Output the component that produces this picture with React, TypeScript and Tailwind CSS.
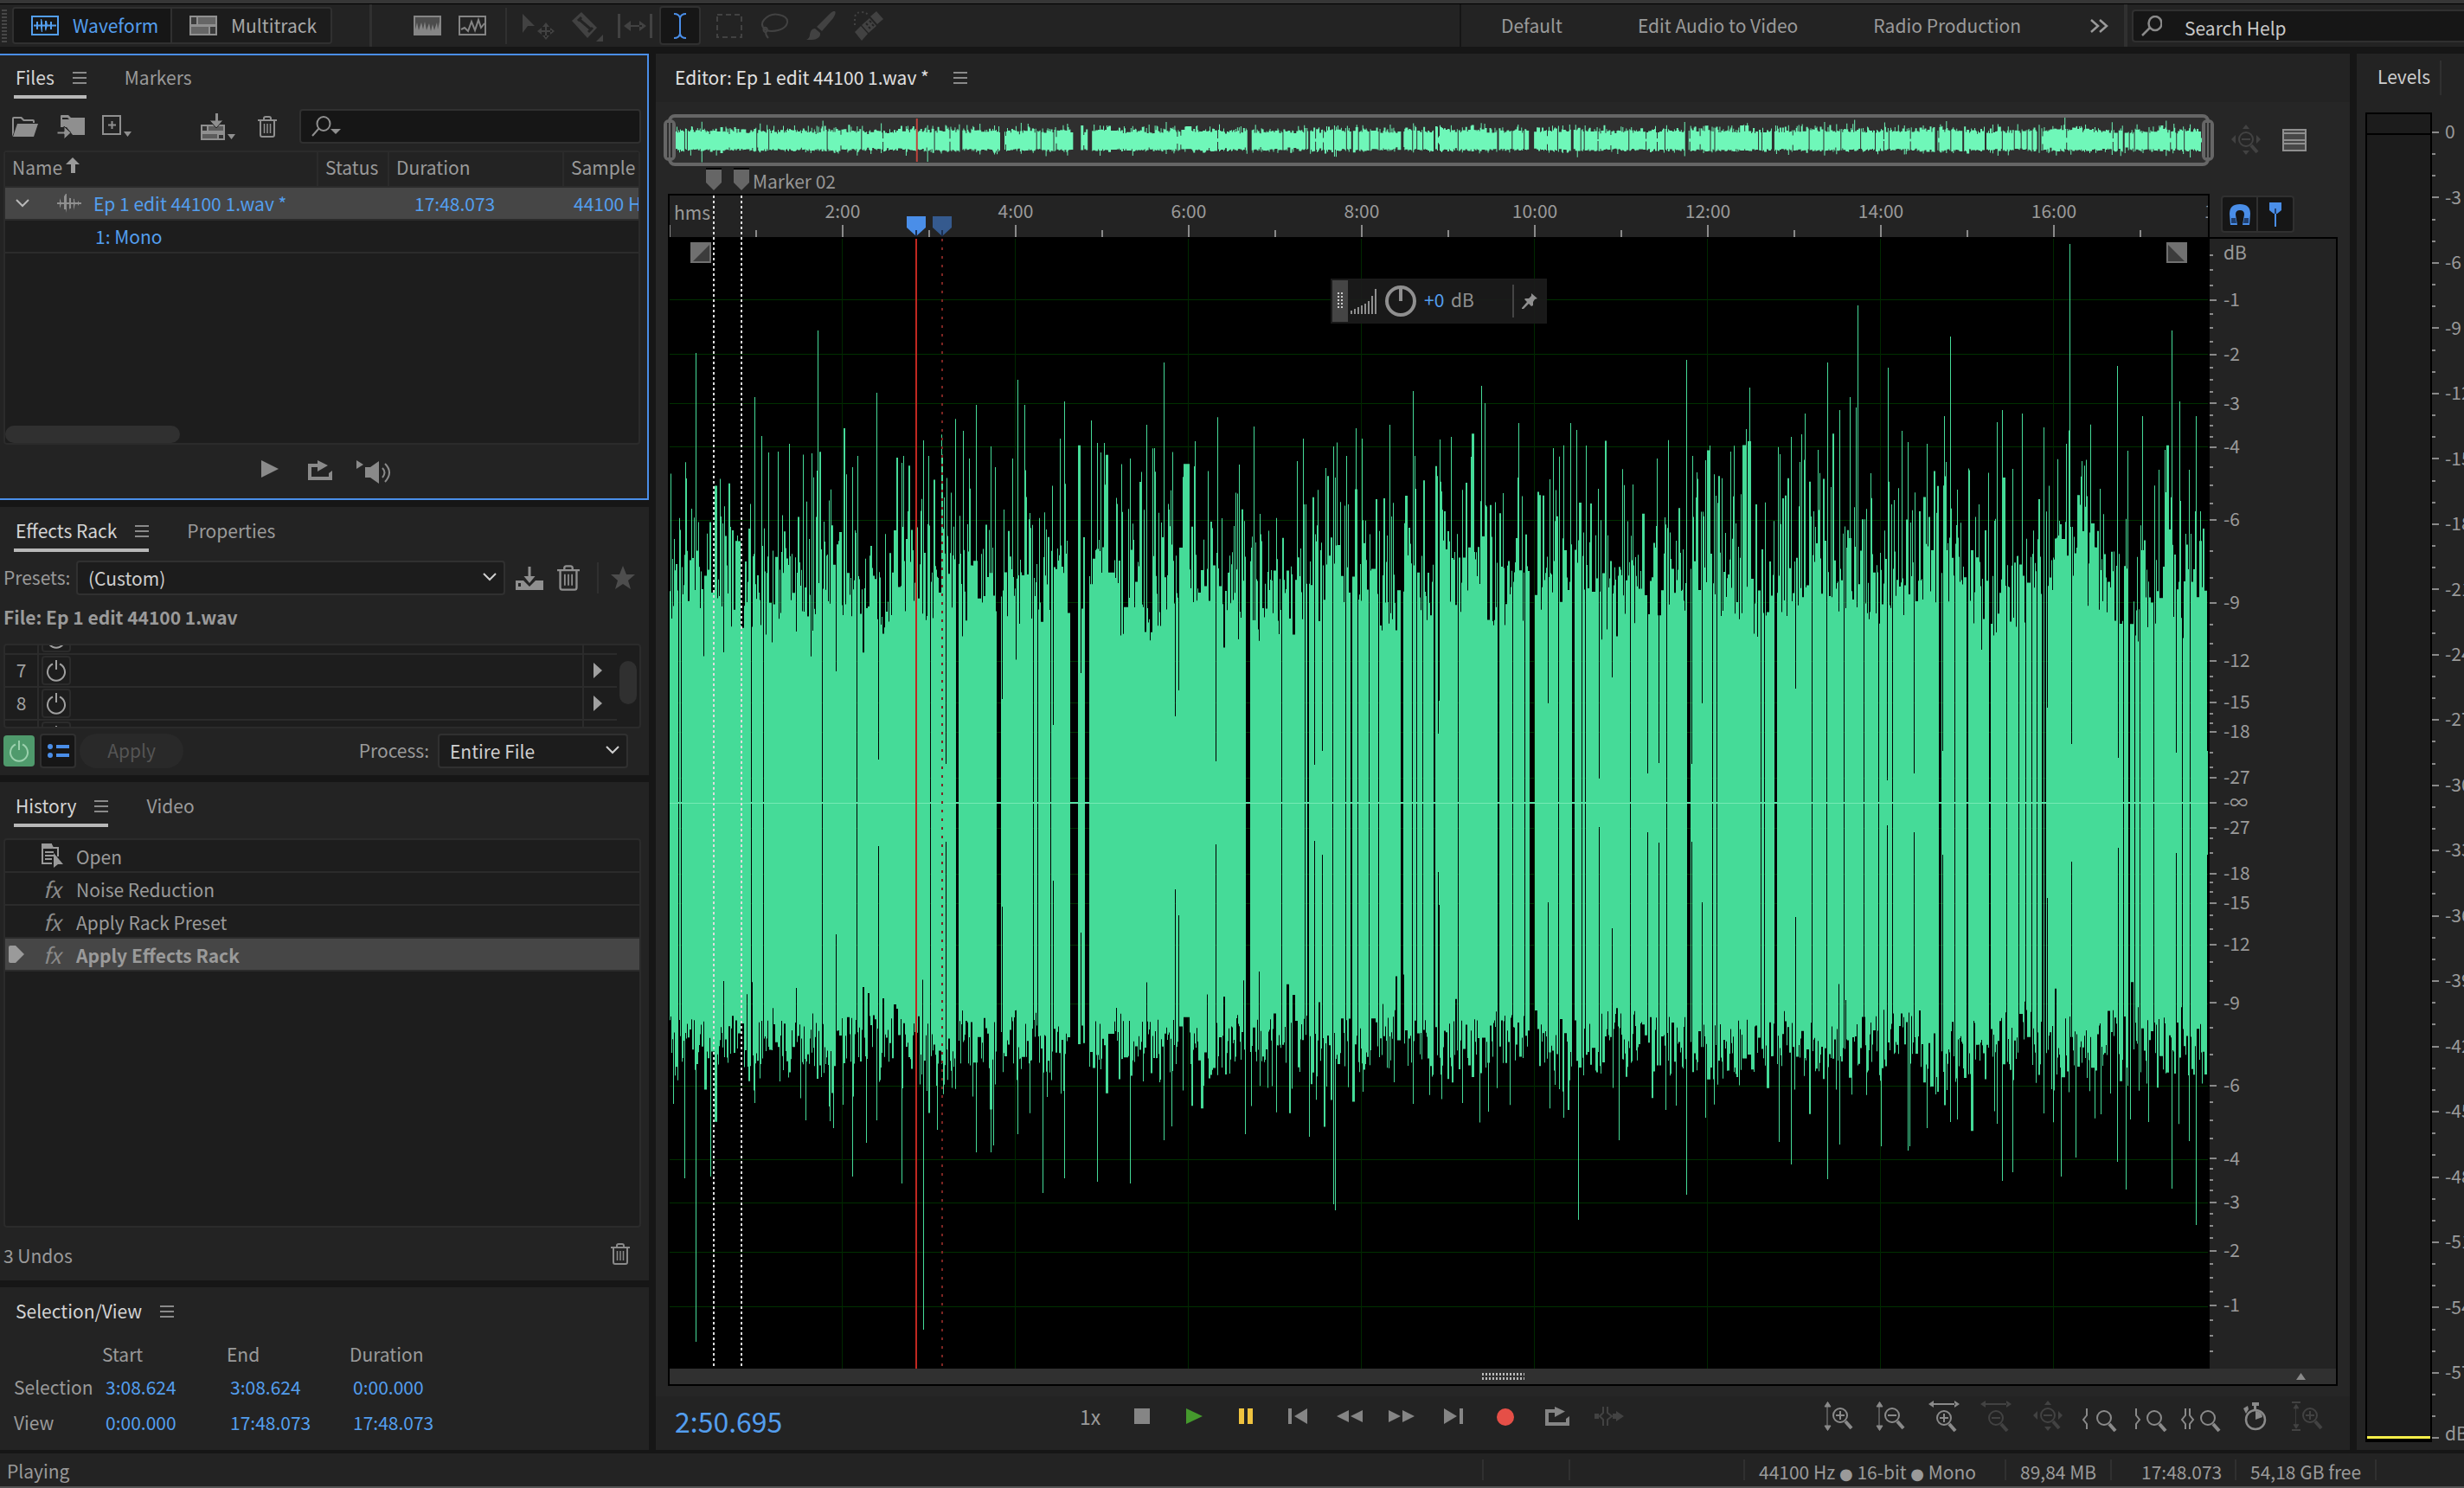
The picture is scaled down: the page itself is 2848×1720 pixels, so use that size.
import type { ReactNode } from 'react';
import { clsx } from 'clsx';

// ━━━━━━━━━━━━━━━━━━━━━━━━━━━━━━━━━━━━━━━━━━
// Waveform data
// ━━━━━━━━━━━━━━━━━━━━━━━━━━━━━━━━━━━━━━━━━━

const WIDTH = 1778;
const HALF = 653;

// [start, end] columns of silence
const gaps: number[][] = [
  [10, 10], [13, 13], [94, 94], [108, 108], [176, 176], [216, 216], [301, 301], [331, 333], [378, 382],
  [420, 420], [425, 425], [440, 440], [463, 471], [480, 484], [666, 670], [707, 707], [734, 734], [737, 738],
  [766, 766], [781, 781], [787, 788], [795, 795], [808, 808], [819, 819], [845, 847], [858, 858], [863, 863],
  [870, 870], [883, 884], [911, 911], [957, 958], [974, 974], [988, 988], [994, 999], [1027, 1027],
  [1043, 1045], [1054, 1054], [1058, 1058], [1110, 1110], [1152, 1152], [1176, 1179], [1205, 1205],
  [1210, 1210], [1261, 1261], [1265, 1265], [1277, 1279], [1320, 1320], [1337, 1337], [1357, 1357],
  [1380, 1380], [1397, 1397], [1413, 1413], [1467, 1469], [1485, 1485], [1499, 1500], [1525, 1526],
  [1545, 1545], [1559, 1559], [1567, 1567], [1574, 1574], [1580, 1580], [1586, 1587], [1589, 1590],
  [1680, 1680], [1686, 1687], [1693, 1693], [1699, 1699], [1715, 1715], [1748, 1748], [1757, 1757],
];

// [column, amplitude] of short quiet passages
const dips: number[][] = [
  [192, 152], [241, 50], [319, 45], [384, 120], [443, 90], [465, 65], [475, 150], [584, 100], [588, 130],
  [631, 48], [745, 44], [754, 60], [888, 80], [889, 118], [1015, 115], [1074, 28], [1089, 145], [1130, 34],
  [1143, 46], [1181, 45], [1193, 115], [1301, 132], [1407, 26], [1438, 34], [1471, 60], [1592, 110],
  [1620, 68], [1674, 52], [1741, 58], [1777, 60],
];

const peaksUp: number[][] = [
  [30, 520], [98, 469], [125, 406], [138, 415], [164, 404], [171, 546], [211, 388], [239, 474], [268, 393],
  [270, 401], [293, 419], [299, 401], [319, 401], [339, 430], [346, 398], [354, 460], [371, 412], [376, 388],
  [396, 398], [402, 489], [410, 460], [451, 421], [456, 464], [475, 396], [487, 442], [494, 416], [498, 405],
  [502, 416], [532, 398], [551, 437], [560, 410], [571, 509], [606, 389], [658, 391], [675, 435], [725, 395],
  [732, 421], [767, 412], [769, 376], [782, 401], [793, 433], [800, 421], [832, 437], [859, 476], [861, 401],
  [903, 423], [938, 482], [942, 462], [981, 439], [1021, 410], [1041, 439], [1048, 431], [1059, 413],
  [1141, 398], [1175, 512], [1182, 401], [1202, 413], [1244, 432], [1248, 480], [1283, 403], [1296, 423],
  [1308, 426], [1312, 450], [1327, 408], [1338, 509], [1352, 454], [1364, 469], [1371, 457], [1373, 575],
  [1408, 503], [1424, 430], [1431, 417], [1453, 415], [1473, 447], [1480, 539], [1534, 440], [1540, 454],
  [1552, 386], [1563, 450], [1588, 434], [1614, 415], [1618, 646], [1673, 505], [1702, 447], [1728, 408],
  [1736, 546], [1745, 464], [1756, 385], [1764, 447],
];

const peaksDown: number[][] = [
  [17, 434], [30, 623], [47, 432], [98, 347], [157, 367], [189, 376], [211, 432], [227, 393], [239, 367],
  [268, 440], [293, 609], [309, 378], [319, 385], [354, 404], [371, 404], [374, 396], [402, 383], [431, 451],
  [456, 434], [494, 438], [532, 440], [571, 390], [580, 374], [665, 383], [739, 386], [767, 464], [769, 471],
  [859, 348], [946, 357], [1033, 364], [1050, 482], [1097, 390], [1151, 355], [1175, 453], [1197, 364],
  [1282, 392], [1296, 418], [1338, 435], [1352, 395], [1400, 397], [1431, 402], [1433, 397], [1453, 376],
  [1480, 369], [1488, 366], [1534, 371], [1540, 437], [1552, 427], [1588, 359], [1608, 432], [1625, 410],
  [1673, 415], [1683, 447], [1688, 366], [1709, 369], [1736, 446], [1756, 391], [1764, 488],
];

// Deterministic noise so every render draws the same audio
function makeRandom(seed: number) {
  let s = seed;
  return () => {
    s = (s * 1664525 + 1013904223) % 4294967296;
    return s / 4294967296;
  };
}

function buildSamples() {
  const rnd = makeRandom(44100);
  const up: number[] = [];
  const down: number[] = [];
  for (let x = 0; x < WIDTH; x++) {
    const swell = Math.sin(x / 23) * 14 + Math.sin(x / 7) * 10;
    const hold = x > 0 && rnd() < 0.3;
    const quiet = rnd() < 0.04 ? 0.8 : 1;
    const top = (204 + swell + rnd() * 85 + Math.pow(rnd(), 3) * 150) * quiet;
    const bottom = (242 + swell / 2 + rnd() * 66 + Math.pow(rnd(), 5) * 70) * quiet;
    up.push(hold ? up[x - 1] : top);
    down.push(hold ? down[x - 1] : bottom);
  }
  peaksUp.forEach(([x, a]) => (up[x] = a));
  peaksDown.forEach(([x, a]) => (down[x] = a));
  dips.forEach(([x, a]) => {
    up[x] = a;
    down[x] = a;
  });
  gaps.forEach(([from, to]) => {
    for (let x = from; x <= to; x++) {
      up[x] = 1;
      down[x] = 1;
    }
  });
  return { up, down };
}

const samples = buildSamples();

function wavePath(center: number, scale: number) {
  let d = '';
  for (let x = 0; x < WIDTH; x++) {
    const top = (center - samples.up[x] * scale).toFixed(1);
    const bottom = (center + samples.down[x] * scale).toFixed(1);
    d += `M${x} ${top}h1V${bottom}h-1z`;
  }
  return d;
}

const mainWave = wavePath(HALF + 1, 1);
const overviewWave = wavePath(26, 0.041);

// ━━━━━━━━━━━━━━━━━━━━━━━━━━━━━━━━━━━━━━━━━━
// Scales
// ━━━━━━━━━━━━━━━━━━━━━━━━━━━━━━━━━━━━━━━━━━

const dbLabels = [1, 2, 3, 4, 6, 9, 12, 15, 18, 27];
const dbMinor = [
  0.25, 0.5, 0.75, 1.25, 1.5, 1.75, 2.25, 2.5, 2.75, 3.25, 3.5, 3.75, 4.5, 5, 5.5, 7, 8, 10, 11, 13, 14, 16, 17,
  21, 24,
];
const amp = (db: number) => HALF * Math.pow(10, -db / 20);
const bothSides = (list: number[]) => list.flatMap((db) => [HALF + 1 - amp(db), HALF + 1 + amp(db)]);
const minutes = Array.from({ length: 19 }, (_, i) => i);
const levelRows = Array.from({ length: 61 }, (_, i) => i);

// ━━━━━━━━━━━━━━━━━━━━━━━━━━━━━━━━━━━━━━━━━━
// Icons
// ━━━━━━━━━━━━━━━━━━━━━━━━━━━━━━━━━━━━━━━━━━

interface IconProps {
  w?: number;
  h?: number;
  className?: string;
  children: ReactNode;
}

function Icon({ w = 32, h = 32, className, children }: IconProps) {
  return (
    <svg width={w} height={h} viewBox={`0 0 ${w} ${h}`} fill="currentColor" className={clsx('shrink-0', className)} aria-hidden="true">
      {children}
    </svg>
  );
}

function MenuIcon() {
  return (
    <Icon w={16} h={14} className="text-[#8a8a8a]">
      <path d="M0 0h16v2H0zM0 6h16v2H0zM0 12h16v2H0z" />
    </Icon>
  );
}

function TrashIcon({ large }: { large?: boolean }) {
  return (
    <svg width={large ? 26 : 22} height={large ? 32 : 25} viewBox="0 0 22 25" fill="none" stroke="currentColor" strokeWidth="2" aria-hidden="true">
      <path d="M0 5h22M7 5V3q0-2 2-2h4q2 0 2 2v2M3 5v17q0 2 2 2h12q2 0 2-2V5" />
      <path d="M7.500 9v11M11 9v11M14.500 9v11" strokeWidth="1.500" />
    </svg>
  );
}

function PowerIcon() {
  return (
    <Icon w={24} h={26}>
      <path d="M8 5.500a10 10 0 1 0 8 0M12 1v11" fill="none" stroke="currentColor" strokeWidth="2" />
    </Icon>
  );
}

function LoopIcon() {
  return (
    <Icon w={28} h={24}>
      <path d="M11 4H0v19h28V12l-4 3v4H4V8h7v5l12-7L11 0z" />
    </Icon>
  );
}

function ChevronDown({ className }: { className?: string }) {
  return (
    <Icon w={16} h={10} className={className}>
      <path d="M1 1l7 7 7-7" fill="none" stroke="currentColor" strokeWidth="2" />
    </Icon>
  );
}

function SmallWave() {
  return (
    <Icon w={28} h={22}>
      <path d="M0 10h28v2H0zM3 5l2 6-2 6zM8 3l2-3 1 0v22l-1-4-2-3zM14 4l2 7-2 8zM19 5l2 6-2 8zM24 8l2 3-2 3z" />
      <path d="M3 7h1v8H3zM8 4h2v14H8zM14 5h2v12h-2zM19 6h1v10h-1z" />
    </Icon>
  );
}

function Lens({ sign }: { sign?: 'plus' | 'minus' }) {
  return (
    <g fill="none" stroke="currentColor">
      <circle cx="18" cy="17" r="8" strokeWidth="2" />
      <path d="M24 24l7 8" strokeWidth="4" />
      {sign && <path d="M13 17h10" strokeWidth="2" />}
      {sign === 'plus' && <path d="M18 12v10" strokeWidth="2" />}
    </g>
  );
}

const verticalArrow = (
  <path d="M3 6v24M0 7l3.500-5.500L7 7zM0 29l3.500 5.500L7 29z" stroke="currentColor" strokeWidth="1" />
);
const horizontalArrow = <path d="M5 3h26v2H5zM0 4l6-4v8zM36 4l-6-4v8z" />;
const navArrows = <path d="M14 5l4-5 4 5zM14 30l4 5 4-5zM6 12v10l-5-5zM30 12v10l5-5z" />;

// ━━━━━━━━━━━━━━━━━━━━━━━━━━━━━━━━━━━━━━━━━━
// Top toolbar
// ━━━━━━━━━━━━━━━━━━━━━━━━━━━━━━━━━━━━━━━━━━

function TopToolbar() {
  return (
    <header className="shrink-0 border-t border-black bg-[#232323]">
      <div className="flex h-[49px] items-stretch">
        <div className="flex w-[427px] items-center pl-[2px]">
          <div className="h-[38px] w-[6px] bg-[repeating-linear-gradient(#474747_0_2px,transparent_2px_4px)]" />
          <div className="ml-[6px] flex h-[43px] w-[370px] overflow-hidden rounded border-2 border-[#303030] text-[21px]">
            <button type="button" className="flex w-[181px] items-center gap-4 bg-[#161616] pl-[20px] text-[#539eee]">
              <Icon w={32} h={23}>
                <path d="M1 1h30v21H1z" fill="none" stroke="currentColor" strokeWidth="2" />
                <path d="M3 10.500h26v2H3zM6 7h2v9H6zM11 4h1l1 4v11h-1l-1-5zM16 6h2l1 5-2 7-1-2zM22 7h2v9h-2z" />
              </Icon>
              Waveform
            </button>
            <button type="button" className="flex flex-1 items-center gap-4 border-l-2 border-[#303030] bg-[#1c1c1c] pl-[20px] text-[#a8a8a8]">
              <Icon w={32} h={23} className="text-[#909090]">
                <path d="M0 0h32v23H0z" />
                <path d="M10 2h20v8H10zM2 13h20v8H2z" fill="#666" />
                <path d="M2 2h6v8H2zM24 13h6v8h-6z" fill="#3c3c3c" />
              </Icon>
              Multitrack
            </button>
          </div>
        </div>
        <div className="flex flex-1 items-center border-l-[3px] border-[#303030]">
          <div className="ml-12 flex gap-5 text-[#858585]">
            <button type="button" aria-label="Spectral frequency display">
              <Icon w={32} h={23}>
                <path d="M0 0h32v23H0z" />
                <path d="M2 2h28v5l-2 9-1-8-3 9-2-7-2 8-2-9-3 8-2-10-2 9-2-8-3 9-2-9-2 8z" fill="#4c4c4c" />
              </Icon>
            </button>
            <button type="button" aria-label="Spectral pitch display">
              <Icon w={32} h={23}>
                <path d="M1 1h30v21H1z" fill="none" stroke="currentColor" strokeWidth="2" />
                <path d="M3 16l4-2 4 4 4-11 4 10 4-12 3 9 4-5" fill="none" stroke="currentColor" strokeWidth="2" />
              </Icon>
            </button>
          </div>
          <div className="ml-[22px] h-[42px] w-[2px] bg-[#303030]" />
          <div className="ml-[18px] flex items-center gap-[17px] text-[#424242]">
            <button type="button" aria-label="Move tool">
              <Icon w={38} h={32}>
                <path d="M0 2l14 14-8 0-6 8z" />
                <path d="M27 12l4 5h-8zM27 32l4-5h-8zM17 22l5-4v8zM37 22l-5-4v8zM26 15h2v14h-2zM20 21h14v2H20z" />
              </Icon>
            </button>
            <button type="button" aria-label="Razor tool">
              <Icon w={38} h={36}>
                <path d="M2 12L13 2l18 18-11 12z" />
                <path d="M10 10l14 12M9 12l4-4M21 25l5-5" stroke="#232323" strokeWidth="3" />
                <path d="M38 28v8h-8z" />
              </Icon>
            </button>
            <button type="button" aria-label="Slip tool">
              <Icon w={40} h={30}>
                <path d="M0 1h3v28H0zM37 1h3v28h-3zM7 15l8-6v12zM33 15l-8-6v12zM12 14h16v2H12z" />
              </Icon>
            </button>
          </div>
          <button type="button" aria-label="Time selection tool" className="ml-[8px] flex h-[45px] w-[48px] items-center justify-center rounded border-2 border-[#303030] bg-[#161616] text-[#4a8ee8]">
            <Icon w={16} h={30}>
              <path d="M1 1q6 0 7 5 1-5 7-5M1 29q6 0 7-5 1 5 7 5M8 6v18" fill="none" stroke="currentColor" strokeWidth="2" />
            </Icon>
          </button>
          <div className="ml-[18px] flex items-center gap-[20px] text-[#424242]">
            <button type="button" aria-label="Marquee selection tool">
              <Icon w={30} h={28}>
                <path d="M1 1h28v26H1z" fill="none" stroke="currentColor" strokeWidth="2" strokeDasharray="6 4" />
              </Icon>
            </button>
            <button type="button" aria-label="Lasso selection tool">
              <Icon w={34} h={30}>
                <path d="M7 20q-7-6-2-12Q12 0 22 2q11 2 10 9-2 9-18 10-6 0-9-3M5 17q4-1 4 3-2 4-4 1-1-2 0-4M7 22q0 4 3 7" fill="none" stroke="currentColor" strokeWidth="2" />
              </Icon>
            </button>
            <button type="button" aria-label="Paintbrush tool">
              <Icon w={34} h={34}>
                <path d="M33 0q2 2-2 8L18 23l-6-5L26 4q5-5 7-4zM10 20l6 5q1 9-16 8 4-2 4-6 1-7 6-7z" />
              </Icon>
            </button>
            <button type="button" aria-label="Spot healing brush">
              <Icon w={36} h={34}>
                <path d="M27 0l8 9-7 6-8-9zM9 17l8 9-7 8-8-10zM19 8l8 9-9 8-8-9z" />
                <path d="M15 14l2 2M19 11l2 2M18 18l2 2M22 15l2 2" stroke="#232323" strokeWidth="2" />
                <path d="M2 16V7q1-6 8-6 5 0 7 3" fill="none" stroke="currentColor" strokeWidth="2" strokeDasharray="2 3" />
              </Icon>
            </button>
          </div>
        </div>
        <nav className="flex w-[768px] items-center border-l-2 border-[#161616] pl-[46px] text-[21px] text-[#9a9a9a]">
          <button type="button">Default</button>
          <button type="button" className="ml-[87px]">Edit Audio to Video</button>
          <button type="button" className="ml-[87px]">Radio Production</button>
          <button type="button" aria-label="More workspaces" className="ml-auto mr-[18px]">
            <Icon w={21} h={16}>
              <path d="M1 1l8 7-8 7M11 1l8 7-8 7" fill="none" stroke="currentColor" strokeWidth="2.500" />
            </Icon>
          </button>
        </nav>
        <label className="flex w-[393px] items-center border-l-4 border-[#303030] pl-[5px]">
          <span className="flex h-[38px] flex-1 items-center gap-[26px] rounded-l border-2 border-r-0 border-[#303030] bg-[#161616] pl-[9px] text-[#8a8a8a]">
            <Icon w={24} h={24}>
              <path d="M16 1a7.500 8 0 1 1 0 16a7.500 8 0 1 1 0-16M10 14L1 23" fill="none" stroke="currentColor" strokeWidth="2.500" />
            </Icon>
            <input type="search" aria-label="Search Help" placeholder="Search Help" className="w-full bg-transparent pt-1 text-[21px] leading-7 text-[#c8c8c8] outline-none placeholder:text-[#c8c8c8]" />
          </span>
        </label>
      </div>
    </header>
  );
}

// ━━━━━━━━━━━━━━━━━━━━━━━━━━━━━━━━━━━━━━━━━━
// Left column panels
// ━━━━━━━━━━━━━━━━━━━━━━━━━━━━━━━━━━━━━━━━━━

function PanelTabs({ active, other }: { active: string; other?: string }) {
  return (
    <div className="flex h-[52px] shrink-0 items-stretch gap-[44px] pl-4 text-[21px]">
      <button type="button" className={clsx('flex items-center gap-[21px] pl-[2px]', other ? 'border-b-4 border-[#b8b8b8] pt-2' : 'pt-1', 'text-[#d4d4d4]')}>
        {active}
        <MenuIcon />
      </button>
      {other && (
        <button type="button" className="pt-2 pb-1 text-[#9a9a9a]">
          {other}
        </button>
      )}
    </div>
  );
}

function FilesPanel() {
  return (
    <section className="flex h-[516px] shrink-0 flex-col border-y-2 border-r-2 border-[#4a8ee8] bg-[#232323]">
      <div className="-mt-[2px]">
        <PanelTabs active="Files" other="Markers" />
      </div>
      <div className="mt-[12px] flex h-[40px] items-center pl-[14px] pr-[7px] text-[#8f8f8f]">
        <button type="button" aria-label="Open file">
          <Icon w={30} h={23}>
            <path d="M0 23V2q0-2 2-2h9l3 3h10q2 0 2 2v2h-2V5H13l-3-3H2v16z" />
            <path d="M6 8h24l-5 15H1z" />
          </Icon>
        </button>
        <button type="button" aria-label="Import file" className="ml-[22px] mt-[2px]">
          <Icon w={32} h={28}>
            <path d="M4 1q0-1 1-1h8l3 3h16v20H18l-7-9H4z" />
            <path d="M0 19h8v-6l8 7.500-8 7.500v-6H0z" stroke="#232323" strokeWidth="1" />
            <path d="M6 3h6l2 2H6z" fill="#232323" />
          </Icon>
        </button>
        <button type="button" aria-label="New file" className="ml-[20px]">
          <Icon w={34} h={26}>
            <path d="M1 1h20v21H1z" fill="none" stroke="currentColor" strokeWidth="2" />
            <path d="M7 10.500h9v2H7zM10.500 7h2v9h-2zM25 19h9l-4.500 6z" />
          </Icon>
        </button>
        <button type="button" aria-label="Insert into multitrack" className="ml-[80px]">
          <Icon w={40} h={31}>
            <path d="M0 13h28v18H0z" />
            <path d="M2 15h5v5H2zM21 25h5v4h-5z" fill="#333" />
            <path d="M9 15h17v5H9zM2 24h17v5H2z" fill="#5c5c5c" />
            <path d="M10 8l8 9 8-9z" stroke="#232323" strokeWidth="1" />
            <path d="M17 0h3v10h-3zM31 24h9l-4.500 6z" />
          </Icon>
        </button>
        <button type="button" aria-label="Close file" className="ml-[26px]">
          <TrashIcon />
        </button>
        <label className="ml-[26px] flex h-[40px] flex-1 items-center rounded border-2 border-[#303030] bg-[#161616] pl-3">
          <Icon w={34} h={24}>
            <path d="M14 1a7.500 8 0 1 1 0 16a7.500 8 0 1 1 0-16M9 14L1 23" fill="none" stroke="currentColor" strokeWidth="2" />
            <path d="M22 15h12l-6 6z" />
          </Icon>
          <input type="search" aria-label="Filter files" className="min-w-0 flex-1 bg-transparent text-[21px] outline-none" />
        </label>
      </div>
      <div className="ml-1 mr-[8px] mt-[8px] flex h-[340px] flex-col overflow-hidden rounded border-2 border-[#2b2b2b] bg-[#1d1d1d]">
        <table className="w-full table-fixed border-collapse text-left text-[21px] leading-6 whitespace-nowrap">
          <colgroup>
            <col className="w-[361px]" />
            <col className="w-[82px]" />
            <col className="w-[202px]" />
            <col />
          </colgroup>
          <thead className="bg-[#232323] text-[#9a9a9a]">
            <tr className="h-[40px]">
              <th className="pl-2 pb-[6px] font-normal">
                <span className="flex items-center gap-1">
                  Name
                  <Icon w={16} h={18} className="-mt-1">
                    <path d="M8 0l8 8h-5v10H6V8H0z" />
                  </Icon>
                </span>
              </th>
              <th className="border-l-2 border-[#2b2b2b] pl-[8px] pb-[6px] font-normal">Status</th>
              <th className="border-l-2 border-[#2b2b2b] pl-[8px] pb-[6px] font-normal">Duration</th>
              <th className="border-l-2 border-[#2b2b2b] pl-[8px] pb-[6px] font-normal">Sample</th>
            </tr>
          </thead>
          <tbody className="text-[#539eee]">
            <tr className="h-[38px] border-y-2 border-[#2b2b2b] bg-[#464646]">
              <td className="pl-3">
                <span className="flex items-center">
                  <ChevronDown className="text-[#b8b8b8]" />
                  <span className="ml-[32px] mr-[14px] text-[#8f8f8f]">
                    <SmallWave />
                  </span>
                  Ep 1 edit 44100 1.wav *
                </span>
              </td>
              <td />
              <td className="pl-[30px]">17:48.073</td>
              <td className="overflow-hidden pl-[12px]">44100 Hz</td>
            </tr>
            <tr className="h-[38px] border-b-2 border-[#2b2b2b]">
              <td className="pl-[104px]">1: Mono</td>
              <td />
              <td />
              <td />
            </tr>
          </tbody>
        </table>
        <div className="mt-auto h-5 w-[202px] rounded-full bg-[#303030]" />
      </div>
      <div className="flex flex-1 items-start justify-center gap-[34px] pt-[18px] text-[#8a8a8a]">
        <button type="button" aria-label="Play preview" className="pl-2">
          <Icon w={20} h={20}>
            <path d="M0 0l20 10L0 20z" />
          </Icon>
        </button>
        <button type="button" aria-label="Loop preview">
          <LoopIcon />
        </button>
        <button type="button" aria-label="Auto-play" className="-ml-[6px]">
          <Icon w={42} h={28}>
            <path d="M0 0l8 5-8 5zM10 8h6L26 1v26l-10-7h-6z" />
            <path d="M30 9q5 5 0 11M33 4q10 10 0 21" fill="none" stroke="currentColor" strokeWidth="2" />
          </Icon>
        </button>
      </div>
    </section>
  );
}

function RackRow({ slot, hideLabel }: { slot: number; hideLabel?: boolean }) {
  return (
    <div className="flex h-[38px] shrink-0 items-center border-b-2 border-[#2b2b2b] text-[21px] text-[#a0a0a0]">
      <span className="w-[37px] text-center">{!hideLabel && slot}</span>
      <span className="h-full border-l-2 border-[#2b2b2b]" />
      <button type="button" aria-label={`Effect ${slot} power`} className="ml-[3px] flex h-[34px] w-[34px] items-center justify-center rounded border-2 border-[#2b2b2b]">
        <PowerIcon />
      </button>
      <span className="ml-auto h-full border-l-2 border-[#2b2b2b]" />
      <button type="button" aria-label={`Effect ${slot} options`} className="w-[38px] pl-[11px]">
        <Icon w={10} h={18}>
          <path d="M0 0l10 9-10 9z" />
        </Icon>
      </button>
    </div>
  );
}

function EffectsPanel() {
  return (
    <section className="h-[310px] shrink-0 bg-[#232323]">
      <PanelTabs active="Effects Rack" other="Properties" />
      <div className="mt-[10px] flex h-[40px] items-center pl-1 text-[#8f8f8f]">
        <label htmlFor="preset" className="w-[84px] text-[21px] text-[#9a9a9a]">Presets:</label>
        <div className="relative">
          <select id="preset" className="h-[40px] w-[496px] appearance-none rounded border-2 border-[#303030] bg-[#1c1c1c] px-3 text-[21px] leading-7 text-[#cfcfcf]">
            <option>(Custom)</option>
          </select>
          <ChevronDown className="pointer-events-none absolute right-[10px] top-[14px] text-[#cfcfcf]" />
        </div>
        <button type="button" aria-label="Save preset" className="ml-[12px]">
          <Icon w={32} h={27}>
            <path d="M0 16h9l7 7 7-7h9v11H0z" />
            <path d="M3 19h3v4H3z" fill="#232323" />
            <path d="M14.500 0h3v11h5L16 19l-6.500-8h5z" />
          </Icon>
        </button>
        <button type="button" aria-label="Delete preset" className="ml-[16px]">
          <TrashIcon large />
        </button>
        <span className="ml-[20px] h-[36px] border-l-2 border-[#303030]" />
        <button type="button" aria-label="Favorite" className="ml-[14px] text-[#4d4d4d]">
          <Icon w={28} h={28}>
            <path d="M14 0l4 10h10l-8 7 3 10-9-6-9 6 3-10-8-7h10z" />
          </Icon>
        </button>
      </div>
      <p className="mt-[10px] pl-1 text-[21px] leading-[30px] font-bold text-[#9a9a9a]">File: Ep 1 edit 44100 1.wav</p>
      <div className="ml-1 mr-[9px] mt-[16px] flex h-[98px] overflow-hidden rounded border-2 border-[#2b2b2b] bg-[#1d1d1d]">
        <div className="-mt-[27px] flex min-w-0 flex-1 flex-col">
          <RackRow slot={6} hideLabel />
          <RackRow slot={7} />
          <RackRow slot={8} />
          <RackRow slot={9} hideLabel />
        </div>
        <div className="mx-[3px] mt-[18px] h-[50px] w-5 rounded-full bg-[#303030]" />
      </div>
      <div className="mt-[6px] flex h-[40px] items-center pl-1 text-[21px]">
        <button type="button" aria-label="Rack power" className="flex h-[36px] w-[36px] items-center justify-center rounded bg-[#4f9a6c] text-[#9bd0ad]">
          <PowerIcon />
        </button>
        <button type="button" aria-label="Rack list view" className="ml-[6px] flex h-[40px] w-[42px] items-center justify-center rounded border-2 border-[#303030] bg-[#161616] text-[#4a8ee8]">
          <Icon w={25} h={16}>
            <circle cx="3" cy="3" r="3" />
            <circle cx="3" cy="13" r="3" />
            <path d="M10 1h15v4H10zM10 11h15v4H10z" />
          </Icon>
        </button>
        <button type="button" disabled className="ml-[4px] h-[40px] w-[120px] rounded-full bg-[#292929] text-[#555]">Apply</button>
        <label htmlFor="process" className="ml-auto mr-[10px] text-[#9a9a9a]">Process:</label>
        <div className="relative mr-[24px]">
          <select id="process" className="h-[40px] w-[220px] appearance-none rounded border-2 border-[#303030] bg-[#1c1c1c] px-3 text-[21px] leading-7 text-[#cfcfcf]">
            <option>Entire File</option>
          </select>
          <ChevronDown className="pointer-events-none absolute right-[10px] top-[14px] text-[#cfcfcf]" />
        </div>
      </div>
    </section>
  );
}

const historyItems = ['Open', 'Noise Reduction', 'Apply Rack Preset', 'Apply Effects Rack'];

function HistoryPanel() {
  return (
    <section className="flex min-h-0 flex-1 flex-col bg-[#232323]">
      <PanelTabs active="History" other="Video" />
      <ul className="ml-1 mr-[9px] mt-[13px] flex-1 rounded border-2 border-[#2b2b2b] bg-[#1d1d1d] text-[21px] text-[#9a9a9a]">
        {historyItems.map((item, i) => (
          <li key={item} className={clsx('h-[38px] border-b-2 border-[#2b2b2b]', i === 3 && 'bg-[#464646] font-bold')}>
            <button type="button" className="flex h-full w-full items-center text-left">
              <span className="w-[42px] pl-1">
                {i === 3 && (
                  <Icon w={18} h={20}>
                    <path d="M2 0h6l10 10L8 20H2q-2 0-2-2V2q0-2 2-2z" />
                  </Icon>
                )}
              </span>
              <span className="w-[40px]">
                {i === 0 ? (
                  <Icon w={26} h={28}>
                    <path d="M1 1h10l2 4h6v10M1 3v20h11" fill="none" stroke="currentColor" strokeWidth="2" />
                    <path d="M0 0h12v6H0zM4 9h10v2H4zM4 13h10v2H4zM4 17h8v2H4zM14 11l11 13h-6l-5 4z" />
                  </Icon>
                ) : (
                  <span className="block pl-[2px] text-[25px] leading-6 font-normal text-[#8a8a8a] italic">fx</span>
                )}
              </span>
              <span className="pt-1">{item}</span>
            </button>
          </li>
        ))}
      </ul>
      <div className="flex h-[61px] items-center justify-between pl-1 pr-[22px] text-[21px] text-[#9a9a9a]">
        <span className="pt-1">3 Undos</span>
        <button type="button" aria-label="Clear history" className="text-[#8a8a8a]">
          <TrashIcon />
        </button>
      </div>
    </section>
  );
}

function SelectionPanel() {
  return (
    <section className="h-[188px] shrink-0 bg-[#232323]">
      <PanelTabs active="Selection/View" />
      <table className="mt-[6px] table-fixed text-left text-[21px] leading-6 text-[#539eee]">
        <colgroup>
          <col className="w-[118px]" />
          <col className="w-[144px]" />
          <col className="w-[142px]" />
          <col className="w-[142px]" />
        </colgroup>
        <thead className="text-[#9a9a9a]">
          <tr className="h-[38px]">
            <td />
            <th className="font-normal">Start</th>
            <th className="font-normal">End</th>
            <th className="font-normal">Duration</th>
          </tr>
        </thead>
        <tbody>
          <tr className="h-[38px]">
            <th className="pl-4 font-normal text-[#9a9a9a]">Selection</th>
            <td className="pl-1">3:08.624</td>
            <td className="pl-1">3:08.624</td>
            <td className="pl-1">0:00.000</td>
          </tr>
          <tr className="h-[44px]">
            <th className="pl-4 font-normal text-[#9a9a9a]">View</th>
            <td className="pl-1">0:00.000</td>
            <td className="pl-1">17:48.073</td>
            <td className="pl-1">17:48.073</td>
          </tr>
        </tbody>
      </table>
    </section>
  );
}

// ━━━━━━━━━━━━━━━━━━━━━━━━━━━━━━━━━━━━━━━━━━
// Editor
// ━━━━━━━━━━━━━━━━━━━━━━━━━━━━━━━━━━━━━━━━━━

function Overview() {
  return (
    <div className="relative h-[60px] rounded-lg border-4 border-[#666] bg-[#2f2f2f] px-[5px]">
      <svg viewBox={`0 0 ${WIDTH} 52`} preserveAspectRatio="none" className="h-full w-full" aria-label="Overview waveform">
        <path d={overviewWave} fill="#6ff7b9" />
        <path d="M281 1v50" stroke="#c0443c" strokeWidth="2" />
      </svg>
      <div className="absolute top-[2px] -left-[9px] h-[48px] w-[14px] rounded-md border-4 border-[#666] bg-[#666]">
        <div className="mx-auto h-full w-[6px] border-x-2 border-[#2f2f2f]" />
      </div>
      <div className="absolute top-[2px] -right-[9px] h-[48px] w-[14px] rounded-md border-4 border-[#666] bg-[#666]">
        <div className="mx-auto h-full w-[6px] border-x-2 border-[#2f2f2f]" />
      </div>
    </div>
  );
}

function MarkerFlag({ className }: { className?: string }) {
  return (
    <Icon w={18} h={26} className={className}>
      <path d="M0 0h18v2H0z" fill="#000" />
      <path d="M0 2h18v15l-9 9-9-9z" />
    </Icon>
  );
}

function Playhead({ className }: { className?: string }) {
  return (
    <Icon w={22} h={23} className={className}>
      <path d="M0 0h22v13L11 23 0 13z" />
      <path d="M10 16h2v7h-2z" fill="#1b2f50" />
    </Icon>
  );
}

function TimeRuler() {
  return (
    <div className="relative h-[50px] overflow-hidden border-x-2 border-t-2 border-black bg-[#232323] text-[21px] leading-6 text-[#9a9a9a]">
      <span className="absolute top-[7px] left-[5px]">hms</span>
      {minutes.map((m) => (
        <div key={m} className="absolute inset-y-0 flex w-0 flex-col items-center justify-end" style={{ left: `${(m * 100 * 100) / WIDTH}%` }}>
          {m > 0 && m % 2 === 0 && <span className="mb-[5px]">{m}:00</span>}
          <span className={clsx('w-[2px] bg-[#8a8a8a]', m % 2 === 0 ? 'h-[14px]' : 'h-[8px]')} />
        </div>
      ))}
      <div className="absolute inset-y-0 left-[50px] w-[2px] bg-[repeating-linear-gradient(#ddd_0_3px,transparent_3px_6px)]" />
      <div className="absolute inset-y-0 left-[82px] w-[2px] bg-[repeating-linear-gradient(#ddd_0_3px,transparent_3px_6px)]" />
      <Playhead className="absolute bottom-[1px] left-[274px] text-[#4a8ee8]" />
      <Playhead className="absolute bottom-[1px] left-[304px] text-[#355a8e]" />
    </div>
  );
}

function GainControl() {
  return (
    <div className="absolute top-[48px] left-[764px] flex h-[52px] w-[250px] items-center border-2 border-[#1a1a1a] bg-[#1c1c1c]/90 text-[21px] text-[#8f8f8f]">
      <div className="flex h-full w-[18px] items-center justify-center bg-[#454545]">
        <div className="flex h-5 gap-[2px]">
          <span className="w-[2px] bg-[repeating-linear-gradient(#ccc_0_2px,transparent_2px_4px)]" />
          <span className="w-[2px] bg-[repeating-linear-gradient(#ccc_0_2px,transparent_2px_4px)]" />
        </div>
      </div>
      <Icon w={32} h={30} className="ml-[3px]">
        <path d="M0 26h2v4H0zM4 24h2v6H4zM8 22h2v8H8zM12 20h2v10h-2zM16 18h2v12h-2zM20 15h2v15h-2zM24 9h2v21h-2zM28 1h2v29h-2z" />
      </Icon>
      <Icon w={36} h={36} className="ml-[8px]">
        <circle cx="18" cy="18" r="16" fill="none" stroke="currentColor" strokeWidth="4" />
        <path d="M16 2h4v16h-4z" />
      </Icon>
      <label className="ml-[9px] mb-[3px] flex items-center gap-[6px]">
        <input type="text" aria-label="Gain" defaultValue="+0" className="w-[25px] bg-transparent text-[#539eee] outline-none" />
        dB
      </label>
      <span className="ml-auto h-[38px] border-l-2 border-[#444]" />
      <button type="button" aria-label="Pin" className="mx-[9px]">
        <Icon w={18} h={18}>
          <path d="M11 0l7 6-3 1-2 3 0 4-2 1-3-3-6 6-2 0 0-1 6-7-3-3 1-1h4l3-3z" />
        </Icon>
      </button>
    </div>
  );
}

function WavePlot() {
  return (
    <div className="relative min-h-0 flex-1 overflow-hidden border-x-2 border-black bg-black">
      <svg viewBox={`0 0 ${WIDTH} 1308`} preserveAspectRatio="none" className="absolute inset-0 h-full w-full" aria-label="Waveform">
        {bothSides(dbLabels).map((y) => (
          <path key={y} d={`M0 ${Math.round(y) + 0.5}H${WIDTH}`} stroke="#003000" strokeWidth="1" />
        ))}
        {minutes.map((m) => m % 2 === 0 && <path key={m} d={`M${m * 100 - 0.5} 2V1308`} stroke="#002800" strokeWidth="1" />)}
        <path d={mainWave} fill="#45db98" />
        <path d="M0 654.500H1778" stroke="#8af0c0" strokeOpacity="0.7" strokeWidth="1" />
        <g fill="none" shapeRendering="crispEdges">
          <path d="M51 0V1306M83 0V1306" stroke="#ddd" strokeWidth="2" strokeDasharray="3 3" />
          <path d="M315 2V1308" stroke="#7c2522" strokeWidth="2" strokeDasharray="3 7" />
          <path d="M285 2V1308" stroke="#c02820" strokeWidth="2" />
        </g>
      </svg>
      <button type="button" aria-label="Fade in" className="absolute top-[6px] left-6 text-[#707070]">
        <Icon w={24} h={24}>
          <path d="M0 0h24v24H0z" />
          <path d="M22 3v19H3z" fill="#3c3c3c" />
        </Icon>
      </button>
      <button type="button" aria-label="Fade out" className="absolute top-[6px] right-6 text-[#707070]">
        <Icon w={24} h={24}>
          <path d="M0 0h24v24H0z" />
          <path d="M2 3v19h19z" fill="#3c3c3c" />
        </Icon>
      </button>
      <GainControl />
    </div>
  );
}

const scaleLabels = [
  { text: '-∞', y: HALF + 1 },
  ...dbLabels.flatMap((db) => [
    { text: `-${db}`, y: HALF + 1 - amp(db) },
    { text: `-${db}`, y: HALF + 1 + amp(db) },
  ]),
];

function AmplitudeScale() {
  return (
    <div className="relative min-h-0 flex-1 border-t-2 border-r-2 border-black bg-[#232323] text-[21px] text-[#9a9a9a]">
      <span className="absolute top-[3px] left-4 leading-6">dB</span>
      {scaleLabels.map(({ text, y }) => (
        <div key={y} className="absolute left-0 flex h-0 items-center gap-2" style={{ top: `${((y - 1) / 1308) * 100}%` }}>
          <span className="h-[2px] w-2 bg-[#8a8a8a]" />
          <span className="pb-[2px]">{text}</span>
        </div>
      ))}
      {bothSides(dbMinor).map((y) => (
        <div key={y} className="absolute left-0 h-[2px] w-1 bg-[#8a8a8a]" style={{ top: `${((y - 2) / 1308) * 100}%` }} />
      ))}
    </div>
  );
}

const transport = [
  { name: 'Stop', color: 'text-[#858585]', art: <path d="M5 5h18v18H5z" /> },
  { name: 'Play', color: 'text-[#459a2d]', art: <path d="M5 5l19 9-19 9z" /> },
  { name: 'Pause', color: 'text-[#efc33f]', art: <path d="M6 5h6v18H6zM16 5h6v18h-6z" /> },
  { name: 'Move to previous', color: 'text-[#858585]', art: <path d="M3 5h4v18H3zM25 5v18l-15-9z" /> },
  { name: 'Rewind', color: 'text-[#858585]', art: <path d="M13 7v14L-1 14zM29 7v14l-14-7z" /> },
  { name: 'Fast forward', color: 'text-[#858585]', art: <path d="M-1 7v14l14-7zM15 7v14l14-7z" /> },
  { name: 'Move to next', color: 'text-[#858585]', art: <path d="M3 5v18l15-9zM21 5h4v18h-4z" /> },
  { name: 'Record', color: 'text-[#e54f47]', art: <circle cx="14" cy="15" r="10" /> },
  { name: 'Loop playback', color: 'text-[#858585]', art: <path d="M11 6H0v19h28V14l-4 3v4H4V10h7v5l12-6.500L11 3z" /> },
  {
    name: 'Skip selection',
    color: 'text-[#424242]',
    art: (
      <>
        <path d="M-3 11h5v6h-5zM18 11h4V8l9 6-9 6v-3h-4z" />
        <path d="M7 3v7l-4 4 4 4v7M12 3v7l5 4-5 4v7" fill="none" stroke="currentColor" strokeWidth="2" />
      </>
    ),
  },
];

const zoomTools = [
  { name: 'Zoom in amplitude', dim: false, art: <>{verticalArrow}<Lens sign="plus" /></> },
  { name: 'Zoom out amplitude', dim: false, art: <>{verticalArrow}<Lens sign="minus" /></> },
  { name: 'Zoom in time', dim: false, art: <>{horizontalArrow}<g transform="translate(0 3)"><Lens sign="plus" /></g></> },
  { name: 'Zoom out time', dim: true, art: <>{horizontalArrow}<g transform="translate(0 3)"><Lens sign="minus" /></g></> },
  { name: 'Zoom out full', dim: true, art: <>{navArrows}<Lens sign="minus" /></> },
  {
    name: 'Zoom in at in point',
    dim: false,
    art: <><path d="M4 10v8l-4 5 4 5v6" fill="none" stroke="currentColor" strokeWidth="2" transform="translate(-1 -1)" /><g transform="translate(5 3)"><Lens /></g></>,
  },
  {
    name: 'Zoom in at out point',
    dim: false,
    art: <><path d="M0 10v8l4 5-4 5v6" fill="none" stroke="currentColor" strokeWidth="2" transform="translate(0 -1)" /><g transform="translate(3 3)"><Lens /></g></>,
  },
  {
    name: 'Zoom to selection',
    dim: false,
    art: <><path d="M-3 10v8l-4 5 4 5v6M2 10v8l4 5-4 5v6" fill="none" stroke="currentColor" strokeWidth="2" transform="translate(0 -1)" /><g transform="translate(5 3)"><Lens /></g></>,
  },
  {
    name: 'Zoom to time',
    dim: false,
    art: (
      <>
        <circle cx="18" cy="22" r="11" fill="none" stroke="currentColor" strokeWidth="2.500" />
        <path d="M18 22V12q8 1 8 7zM14 2h8v4h-3v5h-3V6h-2zM4 9l5-3 1 4-3 5z" />
      </>
    ),
  },
  {
    name: 'Zoom vertical full',
    dim: true,
    art: <><path d="M0 1h10v2H0zM0 33h10v2H0z" /><g transform="translate(2 3) scale(.85)">{verticalArrow}</g><g transform="translate(3 0)"><Lens sign="plus" /></g></>,
  },
];

function TransportBar() {
  return (
    <div className="flex h-[62px] shrink-0 items-center bg-[#232323] pb-4 pr-[20px] pl-[22px] text-[#9a9a9a]">
      <output className="w-[450px] pt-[10px] text-[32px] leading-8 text-[#539eee]">2:50.695</output>
      <button type="button" className="w-[60px] text-center text-[23px]">1x</button>
      {transport.map(({ name, color, art }) => (
        <button key={name} type="button" aria-label={name} className={clsx('flex w-[60px] justify-center', color)}>
          <Icon w={28} h={28} className="overflow-visible">{art}</Icon>
        </button>
      ))}
      <div className="ml-auto flex">
        {zoomTools.map(({ name, dim, art }) => (
          <button key={name} type="button" aria-label={name} className={clsx('flex w-[60px] justify-center', dim ? 'text-[#424242]' : 'text-[#8a8a8a]')}>
            <Icon w={34} h={36} className="overflow-visible">{art}</Icon>
          </button>
        ))}
      </div>
    </div>
  );
}

function EditorPanel() {
  return (
    <section className="flex min-w-0 flex-1 flex-col bg-[#232323]">
      <div className="flex h-[56px] shrink-0 items-center gap-[28px] pl-[22px] text-[21px] text-[#e0e0e0]">
        <h1>Editor: Ep 1 edit 44100 1.wav *</h1>
        <button type="button" aria-label="Editor menu">
          <MenuIcon />
        </button>
      </div>
      <div className="flex min-h-0 flex-1 flex-col bg-[#262626] px-[14px] pt-[14px] pb-3">
        <div className="flex min-h-0 flex-1">
          <div className="flex min-w-0 flex-1 flex-col">
            <Overview />
            <div className="flex h-[32px] items-start gap-[14px] pt-[2px] pl-[44px] text-[21px] leading-[30px] text-[#969696]">
              <MarkerFlag className="text-[#666]" />
              <MarkerFlag className="text-[#666]" />
              <span className="-ml-[10px]">Marker 02</span>
            </div>
            <TimeRuler />
            <WavePlot />
          </div>
          <div className="flex w-[148px] shrink-0 flex-col">
            <div className="flex h-[60px] items-center gap-[24px] pl-6">
              <button type="button" aria-label="Zoom out full" className="text-[#424242]">
                <Icon w={36} h={36}>
                  {navArrows}
                  <Lens sign="minus" />
                </Icon>
              </button>
              <button type="button" aria-label="Show spectral display" className="text-[#8f8f8f]">
                <Icon w={28} h={26}>
                  <path d="M0 0h28v26H0z" />
                  <path d="M2 2h24v2H2zM2 6h24v6H2zM2 14h24v2H2zM2 18h24v6H2z" fill="#474747" />
                </Icon>
              </button>
            </div>
            <div className="flex h-[82px] items-end pb-[5px] pl-[13px] text-[#4a8ee8]">
              <button type="button" aria-label="Toggle snapping" className="flex h-[43px] w-[43px] items-center justify-center rounded-l border-2 border-[#303030] bg-[#161616]">
                <Icon w={26} h={26}>
                  <path d="M2 25L1 12Q1 1 13 1t12 11l-1 13h-8l2-12q0-5-5-5t-5 5l2 12z" />
                  <path d="M3 17h5l1 6H3zM18 17h5l0 6h-6z" fill="#1f3f70" />
                </Icon>
              </button>
              <button type="button" aria-label="Toggle playhead follow" className="flex h-[43px] w-[42px] items-center justify-center rounded-r border-2 border-l-0 border-[#303030] bg-[#161616]">
                <Icon w={14} h={28}>
                  <path d="M0 0h14v9l-5 4H5L0 9zM6 12h2v16H6z" />
                  <path d="M6 7h2v6H6z" fill="#1f3f70" />
                </Icon>
              </button>
            </div>
            <AmplitudeScale />
          </div>
        </div>
        <div className="flex h-[20px] shrink-0 items-center border-2 border-t-0 border-black bg-[#303030]">
          <div className="flex-1" />
          <div className="flex h-[8px] w-[49px] flex-col justify-between">
            <span className="h-[3px] bg-[repeating-linear-gradient(90deg,#bbb_0_2px,#303030_2px_4px)]" />
            <span className="h-[3px] bg-[repeating-linear-gradient(90deg,#bbb_0_2px,#303030_2px_4px)]" />
          </div>
          <div className="flex flex-1 justify-end text-[#8a8a8a]">
            <Icon w={11} h={8} className="mr-[35px]">
              <path d="M5.500 0L11 8H0z" />
            </Icon>
          </div>
        </div>
      </div>
      <TransportBar />
    </section>
  );
}

// ━━━━━━━━━━━━━━━━━━━━━━━━━━━━━━━━━━━━━━━━━━
// Levels + status
// ━━━━━━━━━━━━━━━━━━━━━━━━━━━━━━━━━━━━━━━━━━

function LevelsPanel() {
  return (
    <section className="flex w-[124px] shrink-0 flex-col overflow-hidden bg-[#232323] pb-[9px] text-[21px]">
      <div className="flex h-[68px] shrink-0 items-start pl-[24px] text-[#cfcfcf]">
        <h2 className="mt-2 h-10 w-[74px] border-r-2 border-[#303030] leading-9">Levels</h2>
      </div>
      <div className="flex min-h-0 flex-1 pl-[10px]">
        <div className="flex w-[77px] shrink-0 flex-col border-2 border-b-4 border-black bg-[#1c1c1c]">
          <div className="h-[24px] border-b-2 border-black" />
          <div className="mt-auto h-[3px] bg-[#f7f04a]" />
        </div>
        <div className="flex flex-1 flex-col justify-between pt-[23px] pb-[4px] text-[#9a9a9a]">
          {levelRows.map((row) => (
            <div key={row} className="flex h-0 items-center gap-[7px]">
              <span className={clsx('h-[2px] bg-[#8a8a8a]', row % 3 === 0 ? 'w-[8px]' : 'w-[4px]')} />
              {row % 3 === 0 && <span className={clsx(row === 60 ? 'pb-3' : 'pb-[2px]')}>{row === 60 ? 'dB' : row === 0 ? '0' : `-${row}`}</span>}
            </div>
          ))}
        </div>
      </div>
    </section>
  );
}

function Dot() {
  return <span className="font-['DejaVu_Sans',sans-serif] text-[18px]">●</span>;
}

function StatusBar() {
  return (
    <footer className="flex h-[40px] shrink-0 items-center border-b-2 border-[#525252] bg-[#232323] pl-2 text-[21px] whitespace-nowrap text-[#9a9a9a]">
      <span className="flex-1 pt-1">Playing</span>
      <span className="h-6 w-[100px] border-l-2 border-[#303030]" />
      <span className="h-6 w-[202px] border-l-2 border-[#303030]" />
      <span className="h-6 w-[302px] border-l-2 border-[#303030] pl-4 leading-7">
        44100 Hz <Dot /> 16-bit <Dot /> Mono
      </span>
      <span className="h-6 w-[122px] border-l-2 border-[#303030] pl-4 leading-7">89,84 MB</span>
      <span className="h-6 w-[144px] border-l-2 border-[#303030] pl-[34px] leading-7">17:48.073</span>
      <span className="h-6 w-[162px] border-l-2 border-[#303030] pl-4 leading-7">54,18 GB free</span>
      <span className="h-6 w-[103px] border-l-2 border-[#303030]" />
    </footer>
  );
}

export default function App() {
  return (
    <div className="flex h-screen flex-col overflow-hidden bg-[#161616] font-['Noto_Sans_CJK_SC','Noto_Sans',sans-serif]">
      <div className="h-1 shrink-0 bg-[#363636]" />
      <TopToolbar />
      <main className="flex min-h-0 flex-1 gap-2 pt-2 pb-1">
        <div className="flex w-[750px] shrink-0 flex-col gap-2">
          <FilesPanel />
          <EffectsPanel />
          <HistoryPanel />
          <SelectionPanel />
        </div>
        <EditorPanel />
        <LevelsPanel />
      </main>
      <StatusBar />
    </div>
  );
}
